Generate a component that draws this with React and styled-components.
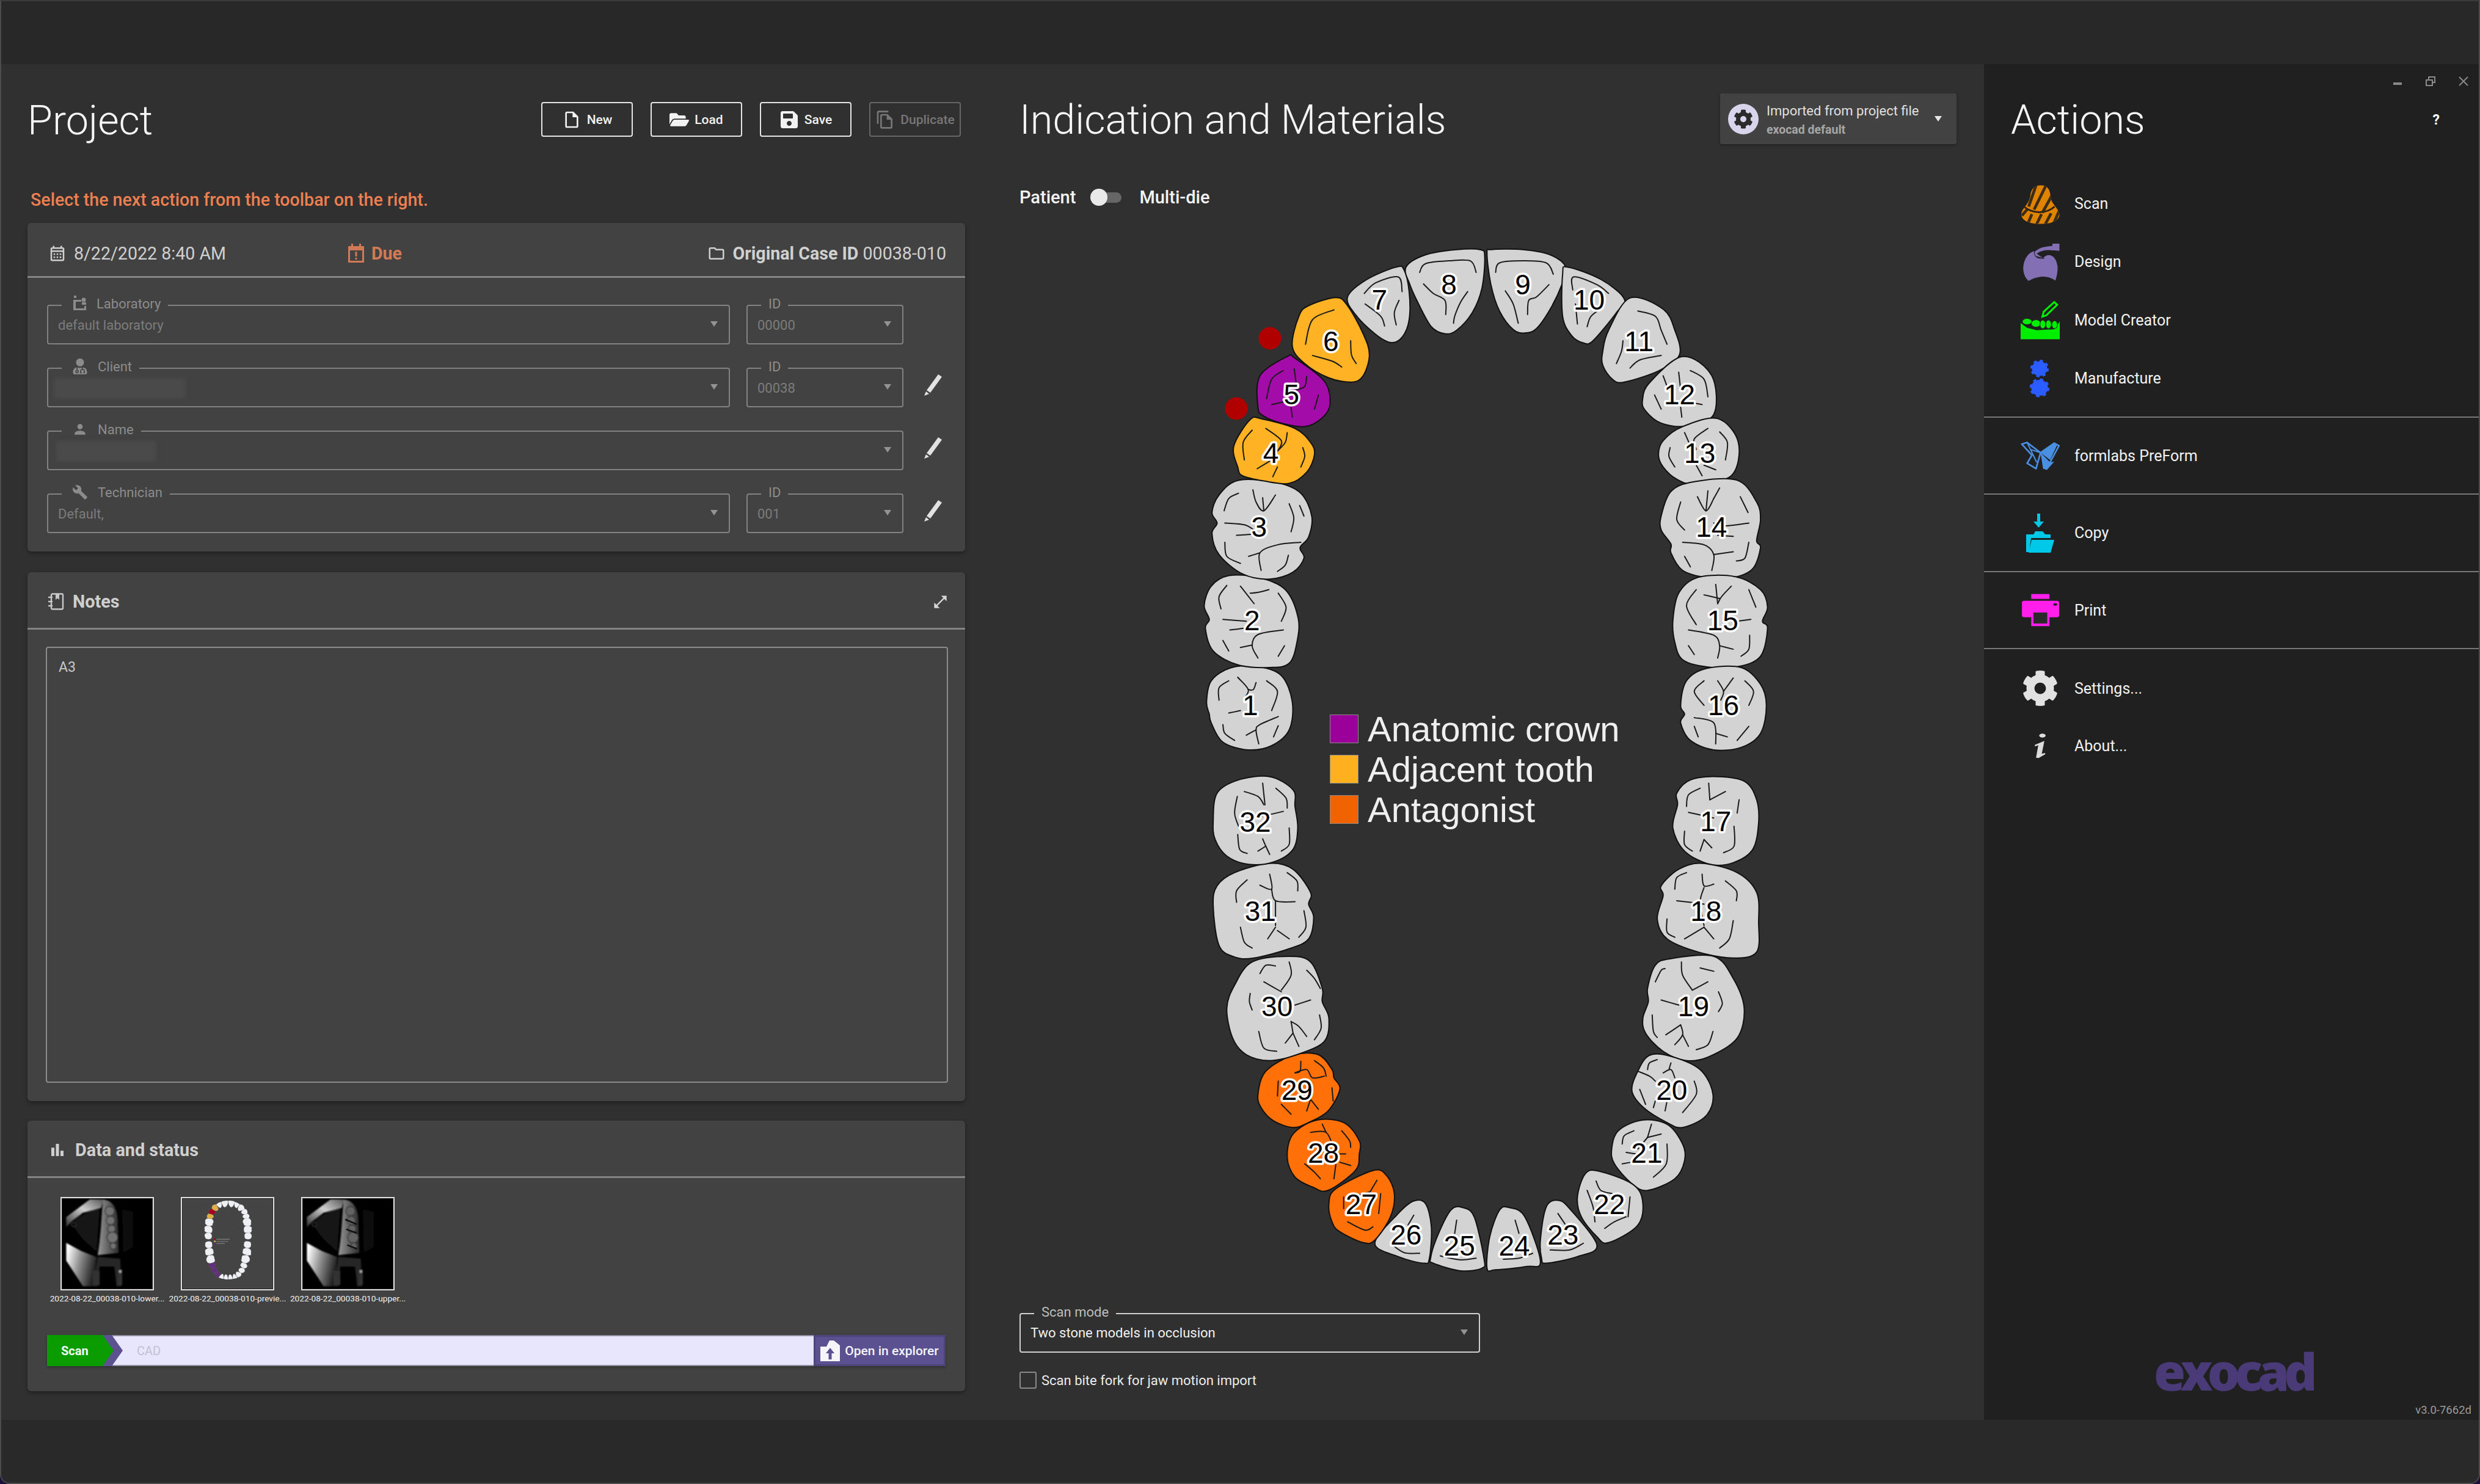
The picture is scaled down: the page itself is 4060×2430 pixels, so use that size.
import React from "react";
import styled, { createGlobalStyle } from "styled-components";
import {
  MdOutlineInsertDriveFile,
  MdOutlineFileCopy,
  MdOutlineCalendarMonth,
  MdOutlineFolder,
  MdPerson,
  MdBuild,
  MdBarChart,
  MdOpenInFull,
} from "react-icons/md";
import { FaFolderOpen, FaSave, FaCog, FaUserMd } from "react-icons/fa";

const GlobalStyle = createGlobalStyle`
  html, body {
    margin: 0;
    padding: 0;
    width: 4060px;
    height: 2430px;
    overflow: hidden;
    background: #1c0f3c;
    font-family: Roboto, "Liberation Sans", sans-serif;
  }
  * { box-sizing: border-box; }
`;

// Shell

const Shell = styled.div`
  width: 4060px;
  height: 2430px;
  display: flex;
  flex-direction: column;
  background: #2a2a2a;
  border: 2px solid #4c4c4c;
  border-top-color: #3a3a3a;
  border-radius: 0 0 16px 16px;
  overflow: hidden;
`;

const TopBar = styled.div`
  height: 103px;
  flex: none;
  background: #282828;
`;

const BottomBar = styled.div`
  height: 103px;
  flex: none;
  background: #292929;
`;

const Main = styled.div`
  flex: 1;
  min-height: 0;
  display: grid;
  grid-template-columns: 1638px 1608px 1fr;
`;

// Project column

const ProjectCol = styled.section`
  background: #303030;
  padding: 62px 60px 0 43px;
  display: flex;
  flex-direction: column;
`;

const TitleRow = styled.div`
  height: 57px;
  display: flex;
  align-items: center;
  justify-content: space-between;
`;

const PageTitle = styled.h1`
  margin: 0;
  padding-top: 4px;
  font-size: 66.5px;
  font-weight: 300;
  line-height: 1;
  color: #f6f6f6;
`;

const Toolbar = styled.div`
  display: flex;
  gap: 29px;
  margin-right: 7px;
`;

const ToolButton = styled.button`
  width: 150px;
  height: 57px;
  display: flex;
  align-items: center;
  justify-content: center;
  gap: 9px;
  background: transparent;
  border: 2px solid ${({ disabled }) => (disabled ? "#666" : "#e4e4e4")};
  border-radius: 4px;
  color: ${({ disabled }) => (disabled ? "#777" : "#f2f2f2")};
  font: 500 21px Roboto, sans-serif;
  padding: 0;
  svg { font-size: 32px; flex: none; }
`;

const Hint = styled.p`
  margin: 87px 0 0 5px;
  height: 32px;
  line-height: 32px;
  font-size: 28.6px;
  font-weight: 500;
  color: #ee7f50;
`;

const Panel = styled.div`
  margin-top: ${({ $top }) => $top}px;
  height: ${({ $height }) => $height}px;
  background: #424242;
  border-radius: 6px;
  box-shadow: 0 3px 6px rgba(0, 0, 0, 0.35);
  display: flex;
  flex-direction: column;
`;

const PanelHead = styled.div`
  height: ${({ $height }) => $height}px;
  flex: none;
  display: flex;
  align-items: center;
  padding: ${({ $offset }) => $offset}px 31px 0 34px;
  border-bottom: 3px solid #848484;
  font-size: 28.6px;
  color: #d0d0d0;
`;

const HeadItem = styled.div`
  display: flex;
  align-items: center;
  gap: 12px;
  color: ${({ $accent }) => ($accent ? "#d27a55" : "#d0d0d0")};
  font-weight: ${({ $bold }) => ($bold ? 700 : 400)};
  width: ${({ $width }) => ($width ? `${$width}px` : "auto")};
  margin-left: ${({ $push }) => ($push ? "auto" : 0)};
  svg { font-size: 30px; flex: none; }
  b { font-weight: 700; }
`;

const PanelTitle = styled.div`
  display: flex;
  align-items: center;
  gap: 14px;
  flex: 1;
  font-size: 28.8px;
  font-weight: 700;
  color: #cfcfcf;
  svg { font-size: 30px; flex: none; }
`;

const ExpandButton = styled.span`
  display: flex;
  color: #d6d6d6;
  font-size: 27px;
  margin-right: -4px;
`;

// Form

const Form = styled.div`
  padding: 30px 0 30px 32px;
  display: flex;
  flex-direction: column;
  gap: 24px;
`;

const FormRow = styled.div`
  display: flex;
  align-items: flex-start;
`;

const Field = styled.fieldset`
  width: ${({ $width }) => $width}px;
  height: 79px;
  flex: none;
  margin: ${({ $top }) => $top || 0}px ${({ $gap }) => $gap || 0}px 0 0;
  padding: 0 18px 0 16px;
  min-width: 0;
  border: 2px solid ${({ $active }) => ($active ? "#cfcfcf" : "#828282")};
  border-radius: 4px;
  display: flex;
  align-items: center;
  justify-content: space-between;
  color: ${({ $active }) => ($active ? "#f0f0f0" : "#7c7c7c")};
  font-size: 22px;
`;

const FieldLabel = styled.legend`
  margin-left: 6px;
  padding: 0 12px;
  height: 30px;
  display: flex;
  align-items: center;
  gap: 16px;
  font-size: 22px;
  color: ${({ $active }) => ($active ? "#bdbdbd" : "#8c8c8c")};
  transform: translateY(-3px);
  svg { font-size: 26px; flex: none; margin-left: 5px; }
`;

const FieldValue = styled.span`
  line-height: 30px;
  transform: translateY(${({ $shift }) => $shift}px);
`;

const Caret = styled.span`
  width: 0;
  height: 0;
  border-left: 6px solid transparent;
  border-right: 6px solid transparent;
  border-top: 9px solid ${({ $color }) => $color || "#939393"};
  flex: none;
  transform: translateY(${({ $shift }) => $shift || 0}px);
`;

const Blurred = styled.span`
  width: ${({ $width }) => $width}px;
  height: 34px;
  margin-left: ${({ $left }) => $left}px;
  background: #4a4a4a;
  filter: blur(3px);
  transform: translateY(-6px);
`;

const EditButton = styled.span`
  width: 48px;
  height: 64px;
  margin: 10px 0 0 24px;
  display: flex;
  align-items: center;
  justify-content: center;
`;

// Notes

const NotesBody = styled.div`
  flex: 1;
  padding: 28px 28px 30px 30px;
  display: flex;
`;

const NotesBox = styled.div`
  flex: 1;
  border: 2px solid #8b8b8b;
  border-radius: 4px;
  padding: 18px 19px;
  font-size: 23px;
  color: #c9c9c9;
`;

// Data and status

const Thumbs = styled.div`
  display: flex;
  padding: 31px 0 0 38px;
  gap: 12px;
`;

const Thumb = styled.figure`
  width: 185px;
  margin: 0;
  display: flex;
  flex-direction: column;
  align-items: center;
  gap: 3px;
`;

const ThumbFrame = styled.div`
  width: 153px;
  height: 153px;
  border: 2px solid #dedede;
  padding: 1px;
  background: #222;
  svg { display: block; width: 100%; height: 100%; }
`;

const ThumbName = styled.figcaption`
  font-size: 13.7px;
  line-height: 20px;
  white-space: nowrap;
  color: #f0f0f0;
`;

const ProgressBar = styled.div`
  margin: 50px 32px 0 32px;
  height: 51px;
  display: flex;
  background: #e8e6fc;
  border-top: 2px solid #8f8da0;
  border-bottom: 2px solid #8f8da0;
  box-shadow: 0 2px 4px rgba(0, 0, 0, 0.3);
`;

const StepShape = styled.div`
  width: 124px;
  background: #5c5290;
  clip-path: polygon(0 0, 106px 0, 124px 50%, 106px 100%, 0 100%);
  margin: -2px 0;
`;

const ScanStep = styled.div`
  width: 109px;
  height: 100%;
  background: #0a9c00;
  clip-path: polygon(0 0, 91px 0, 109px 50%, 91px 100%, 0 100%);
  color: #f4fff4;
  font-size: 20px;
  font-weight: 700;
  display: flex;
  align-items: center;
  padding-left: 23px;
`;

const NextStep = styled.div`
  flex: 1;
  display: flex;
  align-items: center;
  padding-left: 23px;
  font-size: 20px;
  color: #c3c0d3;
`;

const ExplorerButton = styled.div`
  width: 216px;
  margin: -2px 0;
  background: #5b5190;
  border: 3px solid #4d4479;
  display: flex;
  align-items: center;
  justify-content: center;
  gap: 8px;
  color: #f4f4fa;
  font-size: 21px;
  font-weight: 500;
  white-space: nowrap;
`;

// Center column

const CenterCol = styled.section`
  background: #303030;
  padding: 48px 45px 0 29px;
  display: flex;
  flex-direction: column;
`;

const CenterHead = styled.div`
  height: 83px;
  display: flex;
  align-items: center;
  justify-content: space-between;
`;

const ProfileBox = styled.div`
  width: 387px;
  height: 83px;
  background: #424242;
  border-radius: 3px;
  box-shadow: 0 2px 4px rgba(0, 0, 0, 0.3);
  display: flex;
  align-items: center;
  padding: 0 24px 0 13px;
  gap: 13px;
`;

const ProfileBadge = styled.span`
  width: 50px;
  height: 50px;
  flex: none;
  border-radius: 50%;
  background: #d8d4ec;
  display: flex;
  align-items: center;
  justify-content: center;
  color: #2b2b2b;
  font-size: 32px;
`;

const ProfileText = styled.div`
  flex: 1;
  display: flex;
  flex-direction: column;
  gap: 8px;
  padding-top: 5px;
  font-size: 22px;
  line-height: 23px;
  color: #e0e0e0;
  white-space: nowrap;
  b { font-size: 19.5px; font-weight: 700; color: #a6a6a6; }
`;

const ModeRow = styled.div`
  margin-top: 71px;
  height: 32px;
  display: flex;
  align-items: center;
  font-size: 29px;
  font-weight: 500;
  color: #f4f4f4;
`;

const Toggle = styled.span`
  width: 51px;
  height: 17px;
  margin: 0 29px 0 24px;
  background: #666;
  border-radius: 9px;
  display: flex;
  align-items: center;
  &::before {
    content: "";
    width: 28px;
    height: 28px;
    flex: none;
    border-radius: 50%;
    background: #e9e9e9;
  }
`;

const Chart = styled.div`
  position: relative;
  width: 1000px;
  height: 1720px;
  margin: 41px 0 0 231px;
  flex: none;
  svg { display: block; }
`;

const Legend = styled.ul`
  position: absolute;
  left: 277px;
  top: 791px;
  margin: 0;
  padding: 0;
  list-style: none;
  display: flex;
  flex-direction: column;
  gap: 21px;
`;

const LegendItem = styled.li`
  height: 45px;
  display: flex;
  align-items: center;
  gap: 15px;
  font: 58px/45px "Liberation Sans", Arial, sans-serif;
  color: #efefef;
  white-space: nowrap;
  &::before {
    content: "";
    width: 45px;
    height: 45px;
    flex: none;
    background: ${({ $color }) => $color};
    border: 1px solid #8a8a8a;
  }
`;

const ToothShape = styled.path`
  fill: ${({ $fill }) => $fill};
  stroke: #111;
  stroke-width: 2;
`;

const Crease = styled.path`
  fill: none;
  stroke: #1a1a1a;
  stroke-width: 2;
  stroke-linecap: round;
`;

const ToothNumber = styled.text`
  font: 46px "Liberation Sans", Arial, sans-serif;
  fill: #000;
  stroke: #fff;
  stroke-width: 7px;
  stroke-linejoin: round;
  paint-order: stroke;
  text-anchor: middle;
  dominant-baseline: central;
`;

const ScanCheck = styled.label`
  margin-top: 33px;
  height: 24px;
  display: flex;
  align-items: center;
  gap: 8px;
  font-size: 22px;
  color: #ececec;
  &::before {
    content: "";
    width: 24px;
    height: 24px;
    flex: none;
    border: 2px solid #8a8a8a;
    border-radius: 3px;
  }
`;

// Actions column

const ActionsCol = styled.aside`
  position: relative;
  background: #202020;
  display: flex;
  flex-direction: column;
`;

const WindowControls = styled.div`
  position: absolute;
  top: 18px;
  right: 15px;
  display: flex;
  gap: 34px;
  align-items: center;
  svg { display: block; }
`;

const ActionsHead = styled.div`
  height: 83px;
  margin: 48px 0 35px;
  padding: 0 64px 0 44px;
  display: flex;
  align-items: center;
  justify-content: space-between;
`;

const HelpMark = styled.span`
  padding-top: 4px;
  font-size: 23px;
  font-weight: 700;
  color: #fff;
`;

const ActionGroup = styled.div`
  height: ${({ $height }) => $height}px;
  flex: none;
  padding: ${({ $top }) => $top || 0}px 0 0 60px;
  display: flex;
  flex-direction: column;
  justify-content: ${({ $top }) => ($top ? "flex-start" : "center")};
  border-bottom: ${({ $last }) => ($last ? "none" : "2px solid #777")};
`;

const ActionRow = styled.div`
  height: ${({ $step }) => $step}px;
  display: flex;
  align-items: center;
  gap: 24px;
  font-size: 25px;
  color: #f2f2f2;
`;

const ActionIcon = styled.span`
  width: 64px;
  height: 64px;
  flex: none;
  display: flex;
  align-items: center;
  justify-content: center;
  svg { display: block; }
`;

const ActionsFoot = styled.div`
  margin-top: auto;
  padding: 0 12px 4px 0;
  display: flex;
  flex-direction: column;
`;

const Logo = styled.div`
  margin-left: 278px;
  height: 66px;
  font: 800 84px/66px "Open Sans", sans-serif;
  letter-spacing: -8.5px;
  color: #4a3a78;
`;

const Version = styled.div`
  align-self: flex-end;
  margin-top: 19px;
  font-size: 18.5px;
  line-height: 24px;
  color: #9a9a9a;
`;

// Tooth geometry, traced from the odontogram

const upper = (x, y) => [x / 1.568 + 1900, y / 1.742 + 380];
const lower = (x, y) => [x / 1.568 + 1900, y / 1.845 + 1250];

const parsePoints = (text, map) =>
  text
    .trim()
    .split(/\s+/)
    .map((p) => {
      const [x, y] = p.split(",").map(Number);
      return map(x, y);
    });

const f = (n) => n.toFixed(1);

const smoothPath = (pts, closed) => {
  const n = pts.length;
  const at = (i) => (closed ? pts[(i + n) % n] : pts[Math.max(0, Math.min(n - 1, i))]);
  let d = `M${f(pts[0][0])} ${f(pts[0][1])}`;
  const last = closed ? n : n - 1;
  for (let i = 0; i < last; i++) {
    const [p0, p1, p2, p3] = [at(i - 1), at(i), at(i + 1), at(i + 2)];
    d += `C${f(p1[0] + (p2[0] - p0[0]) / 6)} ${f(p1[1] + (p2[1] - p0[1]) / 6)} ${f(p2[0] - (p3[0] - p1[0]) / 6)} ${f(p2[1] - (p3[1] - p1[1]) / 6)} ${f(p2[0])} ${f(p2[1])}`;
  }
  return closed ? `${d}Z` : d;
};

const GRAY = "#d3d3d3";
const YELLOW = "#ffb324";
const PURPLE = "#a30ca8";
const ORANGE = "#ff7008";

const RAW_TEETH = [
  [1, upper, GRAY, "230,1350", "118,1340 130,1280 180,1243 250,1240 310,1265 338,1340 330,1420 285,1465 225,1477 160,1455 130,1400 125,1375", "150,1335 150,1300 175,1280|198,1270 225,1305 215,1330|245,1285 238,1305 225,1305|272,1280 300,1310 285,1365|175,1372 205,1365|160,1405 165,1430 190,1450|302,1382 255,1405 245,1420 252,1460|220,1435 245,1420|302,1408 290,1440"],
  [2, upper, GRAY, "235,1108", "112,1065 130,1010 175,980 250,985 320,1020 353,1100 350,1170 330,1230 280,1242 200,1235 135,1195 115,1130 125,1105", "155,1075 150,1040 170,1008|205,1010 240,1060|230,1030 250,1028 278,1020|302,1030 322,1070 310,1110|160,1105 220,1110|178,1135 215,1130|160,1165 175,1195|315,1135 250,1148 235,1180 250,1215|205,1185 235,1178|318,1180 302,1210"],
  [3, upper, GRAY, "253,842", "132,800 150,750 200,708 300,715 360,745 388,810 380,870 358,900 368,930 340,970 280,990 210,975 150,920 132,860 145,830", "163,795 175,760 200,745|237,735 245,770 265,795 295,750|262,758 265,795|330,775 342,815 335,855|357,780 368,810|165,830 215,835 240,850|195,865 235,862|165,885 170,925 205,945|360,885 300,892 255,915 258,965|226,925 255,915|328,922 320,950 300,968"],
  [4, upper, YELLOW, "283,630", "188,610 230,535 260,533 345,560 385,600 395,635 375,685 330,717 265,710 210,695 198,670", "215,650 212,600 235,565|270,560 310,595 300,625|325,572 320,600 300,625|365,615 370,640 360,670|248,675 285,650|300,670 288,698"],
  [5, upper, PURPLE, "336,463", "250,500 255,410 325,355 345,360 420,425 435,490 415,530 370,555 310,545 265,525", "272,475 285,420 315,395|343,390 350,450|375,412 370,440 350,450|285,492 335,480|335,500 338,528|405,465 395,505"],
  [6, upper, YELLOW, "437,312", "338,325 355,240 380,210 450,187 480,210 520,290 536,350 520,410 490,428 430,415 370,375", "372,320 390,250 445,222|390,352 440,368 465,385|488,310 490,350 502,375"],
  [7, upper, GRAY, "562,193", "480,185 530,135 605,100 625,108 638,170 638,250 620,300 590,315 550,290 500,235", "523,175 552,145 610,128 620,170|525,205 565,240 575,268|612,195 600,230 605,265"],
  [8, upper, GRAY, "740,150", "630,100 680,65 760,50 820,50 832,70 825,160 800,230 760,280 730,290 695,270 660,200 640,150", "665,115 680,90 740,82 795,82 810,115|675,148 700,175 730,195 732,235|788,170 770,200 755,240 752,260"],
  [9, upper, GRAY, "930,150", "838,60 850,50 930,50 1000,65 1040,100 1030,150 1000,220 965,275 935,288 905,278 870,225 848,150", "860,115 870,88 930,82 990,88 1008,120|885,168 905,205 918,260|997,150 965,185 945,195 942,235"],
  [10, upper, GRAY, "1100,193", "1032,120 1045,100 1130,135 1190,190 1170,230 1110,310 1085,316 1055,295 1032,240", "1058,165 1060,128 1120,150 1150,175|1065,205 1070,262|1135,215 1105,240 1095,270"],
  [11, upper, GRAY, "1228,312", "1135,340 1150,280 1205,188 1290,220 1320,280 1332,350 1280,395 1190,428 1160,420 1135,380", "1225,225 1270,240 1285,280 1300,320|1187,310 1183,340 1170,375|1205,388 1230,365 1285,352"],
  [12, upper, GRAY, "1332,463", "1237,480 1255,430 1340,355 1415,410 1420,520 1350,553 1285,545 1245,510", "1290,410 1300,440|1330,400 1335,450|1360,395 1395,420 1405,470|1268,465 1285,505|1335,500 1338,528|1360,485 1390,492"],
  [13, upper, GRAY, "1384,630", "1278,635 1290,595 1340,555 1430,532 1483,600 1465,695 1370,718 1325,705 1290,670", "1345,572 1360,610|1405,560 1370,590 1375,620|1435,570 1455,600 1450,650|1308,615 1305,640 1320,670|1375,665 1390,695|1395,665 1425,678"],
  [14, upper, GRAY, "1414,842", "1285,810 1310,740 1370,712 1480,708 1530,770 1540,820 1530,880 1540,900 1520,960 1470,985 1400,985 1340,965 1310,915 1310,890 1285,850", "1335,770 1325,820 1345,850|1378,755 1400,795 1420,760|1405,738 1400,795|1435,730 1420,760|1488,755 1508,800|1510,830 1450,838 1420,830|1470,868 1430,865|1340,885 1395,892 1420,920 1415,965|1420,920 1470,912|1345,925 1360,955|1510,885 1500,930 1478,938"],
  [15, upper, GRAY, "1443,1108", "1315,1110 1330,1030 1380,985 1475,983 1540,1020 1558,1070 1545,1110 1558,1130 1540,1210 1480,1240 1400,1240 1340,1220 1320,1170", "1375,1020 1350,1065 1375,1120|1395,1035 1435,1045|1425,1005 1430,1060|1465,1010 1440,1040 1430,1060|1510,1020 1528,1070|1515,1105 1480,1110|1355,1135 1420,1150 1435,1180 1430,1215|1435,1180 1470,1190|1355,1180 1370,1205|1512,1150 1510,1190 1490,1210"],
  [16, upper, GRAY, "1445,1350", "1335,1350 1350,1280 1400,1245 1490,1242 1540,1290 1555,1350 1540,1430 1490,1470 1420,1477 1360,1450 1335,1400 1345,1375", "1395,1280 1370,1310 1395,1350|1430,1280 1445,1310 1438,1335|1470,1272 1445,1310|1500,1280 1522,1310 1510,1350|1370,1385 1420,1400 1425,1460|1425,1430 1455,1440|1370,1410 1380,1440|1510,1410 1480,1450"],
  [17, lower, GRAY, "1425,175", "1315,195 1327,125 1325,90 1360,50 1430,40 1500,55 1530,110 1535,180 1520,260 1470,300 1410,305 1345,265", "1407,60 1410,110|1350,130 1355,95 1385,75|1450,85 1410,110|1485,110 1480,150|1355,148 1420,165|1345,205 1345,245 1365,265|1472,190 1472,250 1445,270|1395,230 1385,265|1395,230 1415,255"],
  [18, lower, GRAY, "1400,447", "1275,470 1290,400 1285,370 1330,320 1390,302 1480,330 1530,390 1535,480 1530,570 1470,588 1380,570 1300,530", "1320,380 1325,345 1350,330|1390,335 1395,370 1420,365|1450,355 1478,385 1478,415|1325,415 1395,425|1395,375 1385,420 1395,490|1300,470 1300,510 1320,525|1395,495 1345,530|1395,495 1420,530|1470,475 1460,530 1435,558"],
  [19, lower, GRAY, "1368,735", "1238,770 1252,720 1250,680 1270,610 1310,590 1420,583 1470,650 1498,740 1480,830 1410,885 1350,898 1290,870 1245,815", "1337,600 1340,640 1365,685|1270,660 1285,625 1295,620|1420,628 1385,618|1365,685 1405,660|1285,715 1330,730|1432,690 1442,725 1432,750|1262,760 1265,810 1275,828|1335,790 1297,820|1335,790 1340,820 1320,850|1340,820 1355,855|1418,810 1405,850 1375,865"],
  [20, lower, GRAY, "1312,987", "1210,990 1225,930 1255,882 1310,885 1385,925 1418,1000 1400,1065 1340,1100 1300,1085 1240,1040", "1225,930 1255,945 1270,960|1250,925 1255,905 1275,895|1310,905 1305,925|1290,935 1310,925 1320,950|1230,985 1245,1030|1370,960 1375,1000 1340,1055|1270,1020 1265,1040|1300,1020 1295,1050"],
  [21, lower, GRAY, "1248,1177", "1158,1165 1175,1110 1235,1078 1300,1090 1340,1150 1345,1200 1320,1255 1250,1290 1210,1270 1165,1210", "1185,1150 1190,1125 1215,1110|1260,1090 1250,1130|1250,1130 1285,1120|1250,1130 1225,1165|1195,1175 1220,1180|1185,1210 1230,1200|1300,1150 1298,1210 1265,1250"],
  [22, lower, GRAY, "1152,1333", "1070,1310 1090,1240 1125,1232 1210,1270 1237,1320 1225,1395 1150,1448 1120,1430 1080,1370", "1118,1262 1130,1290 1160,1300|1095,1290 1110,1340 1115,1385|1140,1405 1165,1385 1195,1370|1205,1310 1200,1370"],
  [23, lower, GRAY, "1033,1425", "975,1440 990,1340 1020,1320 1050,1345 1120,1455 1070,1490 990,1510 978,1495", "1020,1360 1040,1395|1000,1470 1050,1470 1085,1450"],
  [24, lower, GRAY, "908,1457", "838,1525 845,1430 870,1350 895,1342 935,1370 975,1505 940,1520 860,1530", "910,1380 920,1420|880,1498 920,1495 955,1480"],
  [25, lower, GRAY, "767,1457", "693,1495 710,1430 745,1350 775,1342 805,1370 830,1495 825,1525 770,1533 700,1510", "760,1380 755,1420|718,1488 770,1500 810,1495"],
  [26, lower, GRAY, "630,1425", "550,1450 610,1360 650,1322 680,1330 695,1400 690,1495 675,1510 610,1490", "650,1365 635,1395|590,1450 625,1478 665,1480"],
  [27, lower, ORANGE, "515,1333", "432,1330 450,1285 545,1230 580,1245 600,1300 590,1370 550,1440 520,1448 460,1415 440,1385", "555,1260 535,1300|505,1305 535,1295|565,1300 560,1360|470,1310 470,1345|480,1385 525,1410 545,1400"],
  [28, lower, ORANGE, "418,1177", "325,1190 340,1120 400,1078 470,1085 510,1140 510,1180 500,1230 430,1290 390,1280 345,1250", "385,1115 425,1115 445,1165|415,1090 425,1115|465,1110 485,1140 488,1160|370,1210 395,1235 410,1255|445,1180 475,1180|450,1210 445,1255|460,1205 488,1215"],
  [29, lower, ORANGE, "350,987", "250,1000 270,930 340,882 405,880 440,925 445,950 460,985 430,1050 380,1085 340,1100 290,1080 258,1040", "395,898 418,920 425,945|360,900 358,930 345,935|345,935 375,925 390,950 420,945|302,960 300,1005|310,1030 335,1060|385,1015 375,1050|385,1015 405,1045|440,980 443,1020"],
  [30, lower, GRAY, "299,735", "170,740 190,670 235,600 330,583 385,600 415,680 415,720 432,770 420,840 350,880 280,898 220,880 185,830", "255,635 270,610 295,612|330,600 335,640 310,685|265,660 310,690|375,625 395,650 410,680|230,695 228,720 235,745|345,730 385,715|335,780 355,795 375,825|335,780 340,815|340,815 320,845|340,815 355,855|252,810 265,860 298,870|408,760 412,800 395,835"],
  [31, lower, GRAY, "256,447", "135,430 145,370 190,330 280,302 340,320 385,390 380,425 393,465 380,530 330,560 240,588 190,585 150,550", "195,420 195,385 222,352|280,335 285,380 255,368|325,330 350,355 352,385|285,380 295,415 345,418|295,415 295,490|205,495 215,540 235,558|295,495 275,530|300,505 330,530|368,445 373,495 355,525"],
  [32, lower, GRAY, "243,178", "135,175 145,90 200,50 280,40 340,80 345,130 352,195 340,260 290,298 225,305 170,280 140,230", "215,85 250,100 265,125|262,60 268,125|296,75 322,105 325,135|197,100 190,150 200,190|225,170 315,145|198,215 203,260 222,272|330,195 330,245 310,265|262,228 270,250 280,275|250,265 270,250"],
];

const TEETH = RAW_TEETH.map(([n, map, fill, label, outline, creases]) => ({
  n,
  fill,
  at: parsePoints(label, map)[0],
  outline: smoothPath(parsePoints(outline, map), true),
  creases: creases.split("|").map((c) => smoothPath(parsePoints(c, map), false)),
}));

const THUMB_FILL = { [GRAY]: "#eef0f4", [YELLOW]: "#dcae45", [PURPLE]: "#a8001c", [ORANGE]: "#62307a" };

const Odontogram = () => (
  <svg width="1000" height="1720" viewBox="1900 380 1000 1720">
    <ellipse cx="2079" cy="554" rx="18.5" ry="18.5" fill="#b00000" />
    <ellipse cx="2024" cy="669" rx="18.5" ry="18.5" fill="#b00000" />
    {TEETH.map((t) => (
      <g key={t.n}>
        <ToothShape d={t.outline} $fill={t.fill} />
        {t.creases.map((d, i) => (
          <Crease key={i} d={d} />
        ))}
      </g>
    ))}
    {TEETH.map((t) => (
      <ToothNumber key={t.n} x={t.at[0]} y={t.at[1]}>
        {t.n}
      </ToothNumber>
    ))}
  </svg>
);

// Thumbnails

const ScanThumb = ({ id, dark }) => (
  <svg viewBox="25 25 457 457" preserveAspectRatio="none">
    <defs>
      <linearGradient id={`${id}a`} x1="0" y1="1" x2="1" y2="0">
        <stop offset="0" stopColor="#2c2c2c" />
        <stop offset="0.55" stopColor="#cfcfcf" />
        <stop offset="1" stopColor="#555" />
      </linearGradient>
      <linearGradient id={`${id}b`} x1="0" y1="0.3" x2="1" y2="0.6">
        <stop offset="0" stopColor="#fff" />
        <stop offset="0.45" stopColor="#8c8c8c" />
        <stop offset="1" stopColor="#141414" />
      </linearGradient>
      <linearGradient id={`${id}m`} x1="0" y1="0" x2="1" y2="0">
        <stop offset="0" stopColor="#989898" />
        <stop offset="1" stopColor="#2c2c2c" />
      </linearGradient>
      <filter id={`${id}s`}>
        <feGaussianBlur stdDeviation="2.5" />
      </filter>
    </defs>
    <rect x="25" y="25" width="457" height="457" fill="#000" />
    <g filter={`url(#${id}s)`}>
      <path d="M45 118 L165 28 L235 28 L222 72 L130 96 L72 140 L45 170Z" fill={`url(#${id}a)`} />
      <path d="M45 250 L120 290 L200 322 L185 470 L130 470 L45 340Z" fill={`url(#${id}b)`} />
      <path d="M75 150 C120 100 190 80 215 80 L200 295 C150 250 110 220 75 150Z" fill="#121212" />
      <circle cx="82" cy="156" r="12" fill="#0a0a0a" stroke="#3c3c3c" strokeWidth="3" />
      <path d="M232 30 C270 30 300 60 306 120 L312 300 L205 312 C222 220 225 100 232 30Z" fill={`url(#${id}m)`} />
      <g fill={dark ? "#646464" : "#727272"} stroke="#2c2c2c" strokeWidth="4">
        <circle cx="266" cy="88" r="24" />
        <circle cx="270" cy="135" r="22" />
        <circle cx="275" cy="178" r="20" />
        <circle cx="280" cy="222" r="28" />
        <circle cx="284" cy="265" r="16" />
      </g>
      <path d="M205 320 L320 330 L325 470 L300 470 L290 370 L215 370 L205 470 L180 470Z" fill="#262626" />
      <path d="M180 390 H215 V465 H180Z M305 385 H330 V465 H305Z" fill="#303030" />
      <path d="M330 80 L385 90 L385 270 L335 300Z" fill="#101010" />
      <circle cx="320" cy="395" r="7" fill="#aaa" />
    </g>
    {dark && (
      <path d="M240 130 L300 155 M245 180 L300 200 M250 260 L300 280" stroke="#111" strokeWidth="8" />
    )}
  </svg>
);

const PreviewThumb = () => (
  <svg viewBox="620 28 455 455" preserveAspectRatio="none">
    <rect x="620" y="28" width="455" height="455" fill="#444" />
    <g transform="translate(730 38) scale(0.2602 0.2385) translate(-1970 -410)">
      {TEETH.map((t) => (
        <path key={t.n} d={t.outline} fill={THUMB_FILL[t.fill]} stroke="#8a8a9a" strokeWidth="2" />
      ))}
    </g>
    <rect x="779" y="229" width="8" height="8" fill="#a8001c" />
    <rect x="779" y="240" width="8" height="8" fill="#dcae45" />
    <rect x="779" y="251" width="8" height="8" fill="#62307a" />
    <path d="M791 233H858M791 244H850M791 255H834" stroke="#777" strokeWidth="4" />
  </svg>
);

// Small icons

const LabIcon = () => (
  <svg width="24" height="26" viewBox="0 0 24 26" fill="#8c8c8c">
    <rect x="3" y="0" width="4" height="4" />
    <path d="M2 7h13v3H6v11h14v-4h3v7H2z" />
    <circle cx="19" cy="7" r="3.5" />
    <rect x="16" y="11" width="7" height="4" />
  </svg>
);

const NotesIcon = () => (
  <svg width="26" height="28" viewBox="0 0 26 28" fill="none" stroke="#c8c8c8">
    <rect x="5" y="1.5" width="19" height="25" rx="2" strokeWidth="2.4" />
    <path d="M12 2v9l3-2.5 3 2.5V2z" fill="#c8c8c8" stroke="none" />
    <path d="M1 7h5M1 14h5M1 21h5" strokeWidth="2.6" strokeLinecap="round" />
  </svg>
);

const DueIcon = () => (
  <svg width="26" height="31" viewBox="0 0 26 31" fill="#d27a55">
    <path d="M5 0h3v4h10V0h3v4h5v27H0V4h5zM3 11v17h20V11z" />
    <rect x="11.5" y="13" width="3" height="8" />
    <rect x="11.5" y="23" width="3" height="3" />
  </svg>
);

const PencilIcon = () => (
  <svg width="34" height="36" viewBox="0 0 34 36" fill="#e2e2e2">
    <path d="M26 1 L32 5 L13 31 L7 27Z" />
    <path d="M6 29 L11 33 L3 36Z" />
  </svg>
);

const ExplorerIcon = () => (
  <svg width="32" height="34" viewBox="0 0 32 34">
    <path d="M0 10h10l5-10h7l10 8v26H0z" fill="#f4f4fa" />
    <path d="M16 12l7 9h-4.5v10h-5V21H9z" fill="#5b5190" />
  </svg>
);

const ScanIcon = () => (
  <svg width="64" height="66" viewBox="130 415 122 133" preserveAspectRatio="none">
    <defs>
      <clipPath id="scan-tooth">
        <path d="M190 420 C215 418 222 435 224 460 C226 482 248 495 251 515 C252 535 225 548 195 547 C165 549 132 540 132 515 C134 495 155 485 160 455 C162 435 170 422 190 420Z" />
      </clipPath>
    </defs>
    <g clipPath="url(#scan-tooth)">
      <rect x="130" y="415" width="122" height="133" fill="#e08400" />
      <path d="M178 420L155 490M210 418L172 500M232 445L198 510M165 515L152 548M195 515L180 548M225 512L207 548M250 505L232 548M150 500L134 520" stroke="#3c2c18" strokeWidth="9" fill="none" />
      <path d="M138 488 C165 515 210 515 236 490" stroke="#2e2418" strokeWidth="6" fill="none" />
    </g>
  </svg>
);

const DesignIcon = () => (
  <svg width="64" height="64" viewBox="130 620 122 125" preserveAspectRatio="none">
    <path d="M138 700 C140 672 155 652 172 648 C180 662 170 672 198 672 C215 650 240 660 245 695 C247 715 240 738 238 742 C220 728 190 722 155 743 C145 735 138 720 138 700Z" fill="#8370b4" />
    <path d="M172 650 C190 634 205 632 228 630 L228 623 L252 623 L252 648 L228 646 C208 644 192 648 182 656 L204 672 L176 664Z" fill="#8370b4" stroke="#202020" strokeWidth="2" />
  </svg>
);

const ModelIcon = () => (
  <svg width="64" height="64" viewBox="130 812 122 126" preserveAspectRatio="none">
    <path d="M130 885 L150 900 L180 908 L210 906 L235 905 L252 880 L252 937 L130 937Z" fill="#00ee00" />
    <g fill="#00ee00" stroke="#202020" strokeWidth="2">
      <ellipse cx="150" cy="880" rx="15" ry="10" />
      <ellipse cx="178" cy="886" rx="15" ry="12" />
      <ellipse cx="199" cy="889" rx="9" ry="14" />
      <ellipse cx="217" cy="889" rx="9" ry="14" />
      <ellipse cx="236" cy="890" rx="9" ry="13" />
    </g>
    <path d="M198 864 L202 848 L235 817 L244 826 L210 860Z" fill="none" stroke="#00ee00" strokeWidth="6" />
  </svg>
);

const GearDots = ({ cx, cy, r }) => (
  <circle
    cx={cx}
    cy={cy}
    r={r}
    fill="#2a5cff"
    stroke="#2a5cff"
    strokeWidth="10"
    strokeDasharray={`${(Math.PI * r) / 8} ${(Math.PI * r) / 8}`}
  />
);

const ManufactureIcon = () => (
  <svg width="64" height="64" viewBox="130 1005 122 128" preserveAspectRatio="none">
    <GearDots cx={189} cy={1038} r={24} />
    <GearDots cx={189} cy={1101} r={26} />
  </svg>
);

const FormlabsIcon = () => (
  <svg width="64" height="48" viewBox="130 1285 122 92">
    <g fill="none" stroke="#4a90e2" strokeWidth="5" strokeLinejoin="round">
      <path d="M133 1295 L150 1290 L192 1322 L178 1372 L150 1355 L165 1330Z" />
      <path d="M150 1290 L180 1352 M192 1322 L160 1312" strokeWidth="4" />
      <path d="M192 1322 L235 1292 L250 1300 L222 1352" />
    </g>
    <path d="M192 1322 L222 1352 L235 1350 L212 1376 L200 1372Z M192 1322 L235 1292 L245 1296 L222 1345Z" fill="#4a90e2" />
  </svg>
);

const CopyIcon = () => (
  <svg width="64" height="64" viewBox="0 0 64 64" fill="#00c8e8">
    <rect x="27" y="0" width="5" height="15" />
    <path d="M21 13h17l-8.5 10z" />
    <path d="M9 34h12l3-5h12l4 5h9v6H17l-3 23h-5z" />
    <path d="M18 43h37l-6 21H13z" />
  </svg>
);

const PrintIcon = () => (
  <svg width="64" height="54" viewBox="130 340 122 162" preserveAspectRatio="none">
    <rect x="163" y="342" width="57" height="24" fill="#ff1eea" />
    <path d="M143 375 H242 Q250 375 250 383 V448 Q250 456 242 456 H220 V500 H163 V456 H143 Q134 456 134 448 V383 Q134 375 143 375Z" fill="#ff1eea" />
    <rect x="170" y="433" width="43" height="54" fill="#2a2a2a" />
    <circle cx="238" cy="393" r="6" fill="#202020" />
  </svg>
);

const AboutIcon = () => (
  <svg width="22" height="42" viewBox="170 1020 42 132" preserveAspectRatio="none" fill="#dcdcdc">
    <circle cx="198" cy="1034" r="10" />
    <path d="M174 1082 L204 1062 L196 1128 L206 1124 L207 1130 L186 1150 L178 1148 L185 1084 L175 1090Z" />
  </svg>
);

const ACTIONS = [
  { rows: [["Scan", <ScanIcon />], ["Design", <DesignIcon />], ["Model Creator", <ModelIcon />], ["Manufacture", <ManufactureIcon />]], height: 413, step: 95.3 },
  { rows: [["formlabs PreForm", <FormlabsIcon />]], height: 126, step: 96 },
  { rows: [["Copy", <CopyIcon />]], height: 127, step: 96 },
  { rows: [["Print", <PrintIcon />]], height: 126, step: 96 },
];

const FIELDS = [
  { label: "Laboratory", icon: <LabIcon />, value: "default laboratory", id: "00000" },
  { label: "Client", icon: <FaUserMd />, blur: [215, -7], id: "00038", edit: true },
  { label: "Name", icon: <MdPerson />, blur: [163, -3], edit: true },
  { label: "Technician", icon: <MdBuild />, value: "Default,", id: "001", edit: true },
];

const THUMB_NAMES = [
  "2022-08-22_00038-010-lower...",
  "2022-08-22_00038-010-previe...",
  "2022-08-22_00038-010-upper...",
];

export default function App() {
  return (
    <>
      <GlobalStyle />
      <Shell>
        <TopBar />
        <Main>
          <ProjectCol>
            <TitleRow>
              <PageTitle>Project</PageTitle>
              <Toolbar>
                <ToolButton><MdOutlineInsertDriveFile />New</ToolButton>
                <ToolButton><FaFolderOpen />Load</ToolButton>
                <ToolButton><FaSave />Save</ToolButton>
                <ToolButton disabled><MdOutlineFileCopy />Duplicate</ToolButton>
              </Toolbar>
            </TitleRow>
            <Hint>Select the next action from the toolbar on the right.</Hint>

            <Panel $top={22} $height={538}>
              <PanelHead $height={90} $offset={12}>
                <HeadItem $width={491}><MdOutlineCalendarMonth />8/22/2022 8:40 AM</HeadItem>
                <HeadItem $accent $bold><DueIcon />Due</HeadItem>
                <HeadItem $push><MdOutlineFolder /><span><b>Original Case ID</b> 00038-010</span></HeadItem>
              </PanelHead>
              <Form>
                {FIELDS.map((field) => (
                  <FormRow key={field.label}>
                    <Field $width={field.id ? 1118 : 1402} $gap={field.id ? 27 : 0}>
                      <FieldLabel>{field.icon}{field.label}</FieldLabel>
                      {field.blur ? (
                        <Blurred $width={field.blur[0]} $left={field.blur[1]} />
                      ) : (
                        <FieldValue $shift={-6}>{field.value}</FieldValue>
                      )}
                      <Caret $shift={-8} />
                    </Field>
                    {field.id && (
                      <Field $width={257}>
                        <FieldLabel>ID</FieldLabel>
                        <FieldValue $shift={-6}>{field.id}</FieldValue>
                        <Caret $shift={-8} />
                      </Field>
                    )}
                    {field.edit && <EditButton><PencilIcon /></EditButton>}
                  </FormRow>
                ))}
              </Form>
            </Panel>

            <Panel $top={34} $height={866}>
              <PanelHead $height={94} $offset={5}>
                <PanelTitle><NotesIcon />Notes</PanelTitle>
                <ExpandButton><MdOpenInFull /></ExpandButton>
              </PanelHead>
              <NotesBody>
                <NotesBox>A3</NotesBox>
              </NotesBody>
            </Panel>

            <Panel $top={32} $height={443}>
              <PanelHead $height={94} $offset={5}>
                <PanelTitle><MdBarChart />Data and status</PanelTitle>
              </PanelHead>
              <Thumbs>
                <Thumb>
                  <ThumbFrame><ScanThumb id="lower" /></ThumbFrame>
                  <ThumbName>{THUMB_NAMES[0]}</ThumbName>
                </Thumb>
                <Thumb>
                  <ThumbFrame><PreviewThumb /></ThumbFrame>
                  <ThumbName>{THUMB_NAMES[1]}</ThumbName>
                </Thumb>
                <Thumb>
                  <ThumbFrame><ScanThumb id="upper" dark /></ThumbFrame>
                  <ThumbName>{THUMB_NAMES[2]}</ThumbName>
                </Thumb>
              </Thumbs>
              <ProgressBar>
                <StepShape><ScanStep>Scan</ScanStep></StepShape>
                <NextStep>CAD</NextStep>
                <ExplorerButton><ExplorerIcon />Open in explorer</ExplorerButton>
              </ProgressBar>
            </Panel>
          </ProjectCol>

          <CenterCol>
            <CenterHead>
              <PageTitle>Indication and Materials</PageTitle>
              <ProfileBox>
                <ProfileBadge><FaCog /></ProfileBadge>
                <ProfileText>
                  <span>Imported from project file</span>
                  <b>exocad default</b>
                </ProfileText>
                <Caret $color="#e6e6e6" />
              </ProfileBox>
            </CenterHead>
            <ModeRow>Patient<Toggle />Multi-die</ModeRow>
            <Chart>
              <Odontogram />
              <Legend>
                <LegendItem $color="#9b009b">Anatomic crown</LegendItem>
                <LegendItem $color="#ffb01f">Adjacent tooth</LegendItem>
                <LegendItem $color="#f06300">Antagonist</LegendItem>
              </Legend>
            </Chart>
            <Field $width={754} $active $top={36}>
              <FieldLabel $active>Scan mode</FieldLabel>
              <FieldValue $shift={2}>Two stone models in occlusion</FieldValue>
              <Caret />
            </Field>
            <ScanCheck>Scan bite fork for jaw motion import</ScanCheck>
          </CenterCol>

          <ActionsCol>
            <WindowControls>
              <svg width="20" height="20" viewBox="0 0 20 20"><rect x="3" y="12" width="14" height="4" fill="#8a8a8a" /></svg>
              <svg width="20" height="20" viewBox="0 0 20 20" fill="none" stroke="#8a8a8a" strokeWidth="2"><rect x="3" y="8" width="10" height="9" /><path d="M7 8V3h10v9h-4" /></svg>
              <svg width="20" height="20" viewBox="0 0 20 20" stroke="#8a8a8a" strokeWidth="2"><path d="M3 3l14 14M17 3L3 17" /></svg>
            </WindowControls>
            <ActionsHead>
              <PageTitle>Actions</PageTitle>
              <HelpMark>?</HelpMark>
            </ActionsHead>
            {ACTIONS.map((group) => (
              <ActionGroup key={group.rows[0][0]} $height={group.height}>
                {group.rows.map(([label, icon]) => (
                  <ActionRow key={label} $step={group.step}>
                    <ActionIcon>{icon}</ActionIcon>
                    {label}
                  </ActionRow>
                ))}
              </ActionGroup>
            ))}
            <ActionGroup $height={210} $top={17} $last>
              <ActionRow $step={94}>
                <ActionIcon><FaCog size={60} color="#e2e2e2" /></ActionIcon>
                Settings...
              </ActionRow>
              <ActionRow $step={94}>
                <ActionIcon><AboutIcon /></ActionIcon>
                About...
              </ActionRow>
            </ActionGroup>
            <ActionsFoot>
              <Logo>exocad</Logo>
              <Version>v3.0-7662d</Version>
            </ActionsFoot>
          </ActionsCol>
        </Main>
        <BottomBar />
      </Shell>
    </>
  );
}
